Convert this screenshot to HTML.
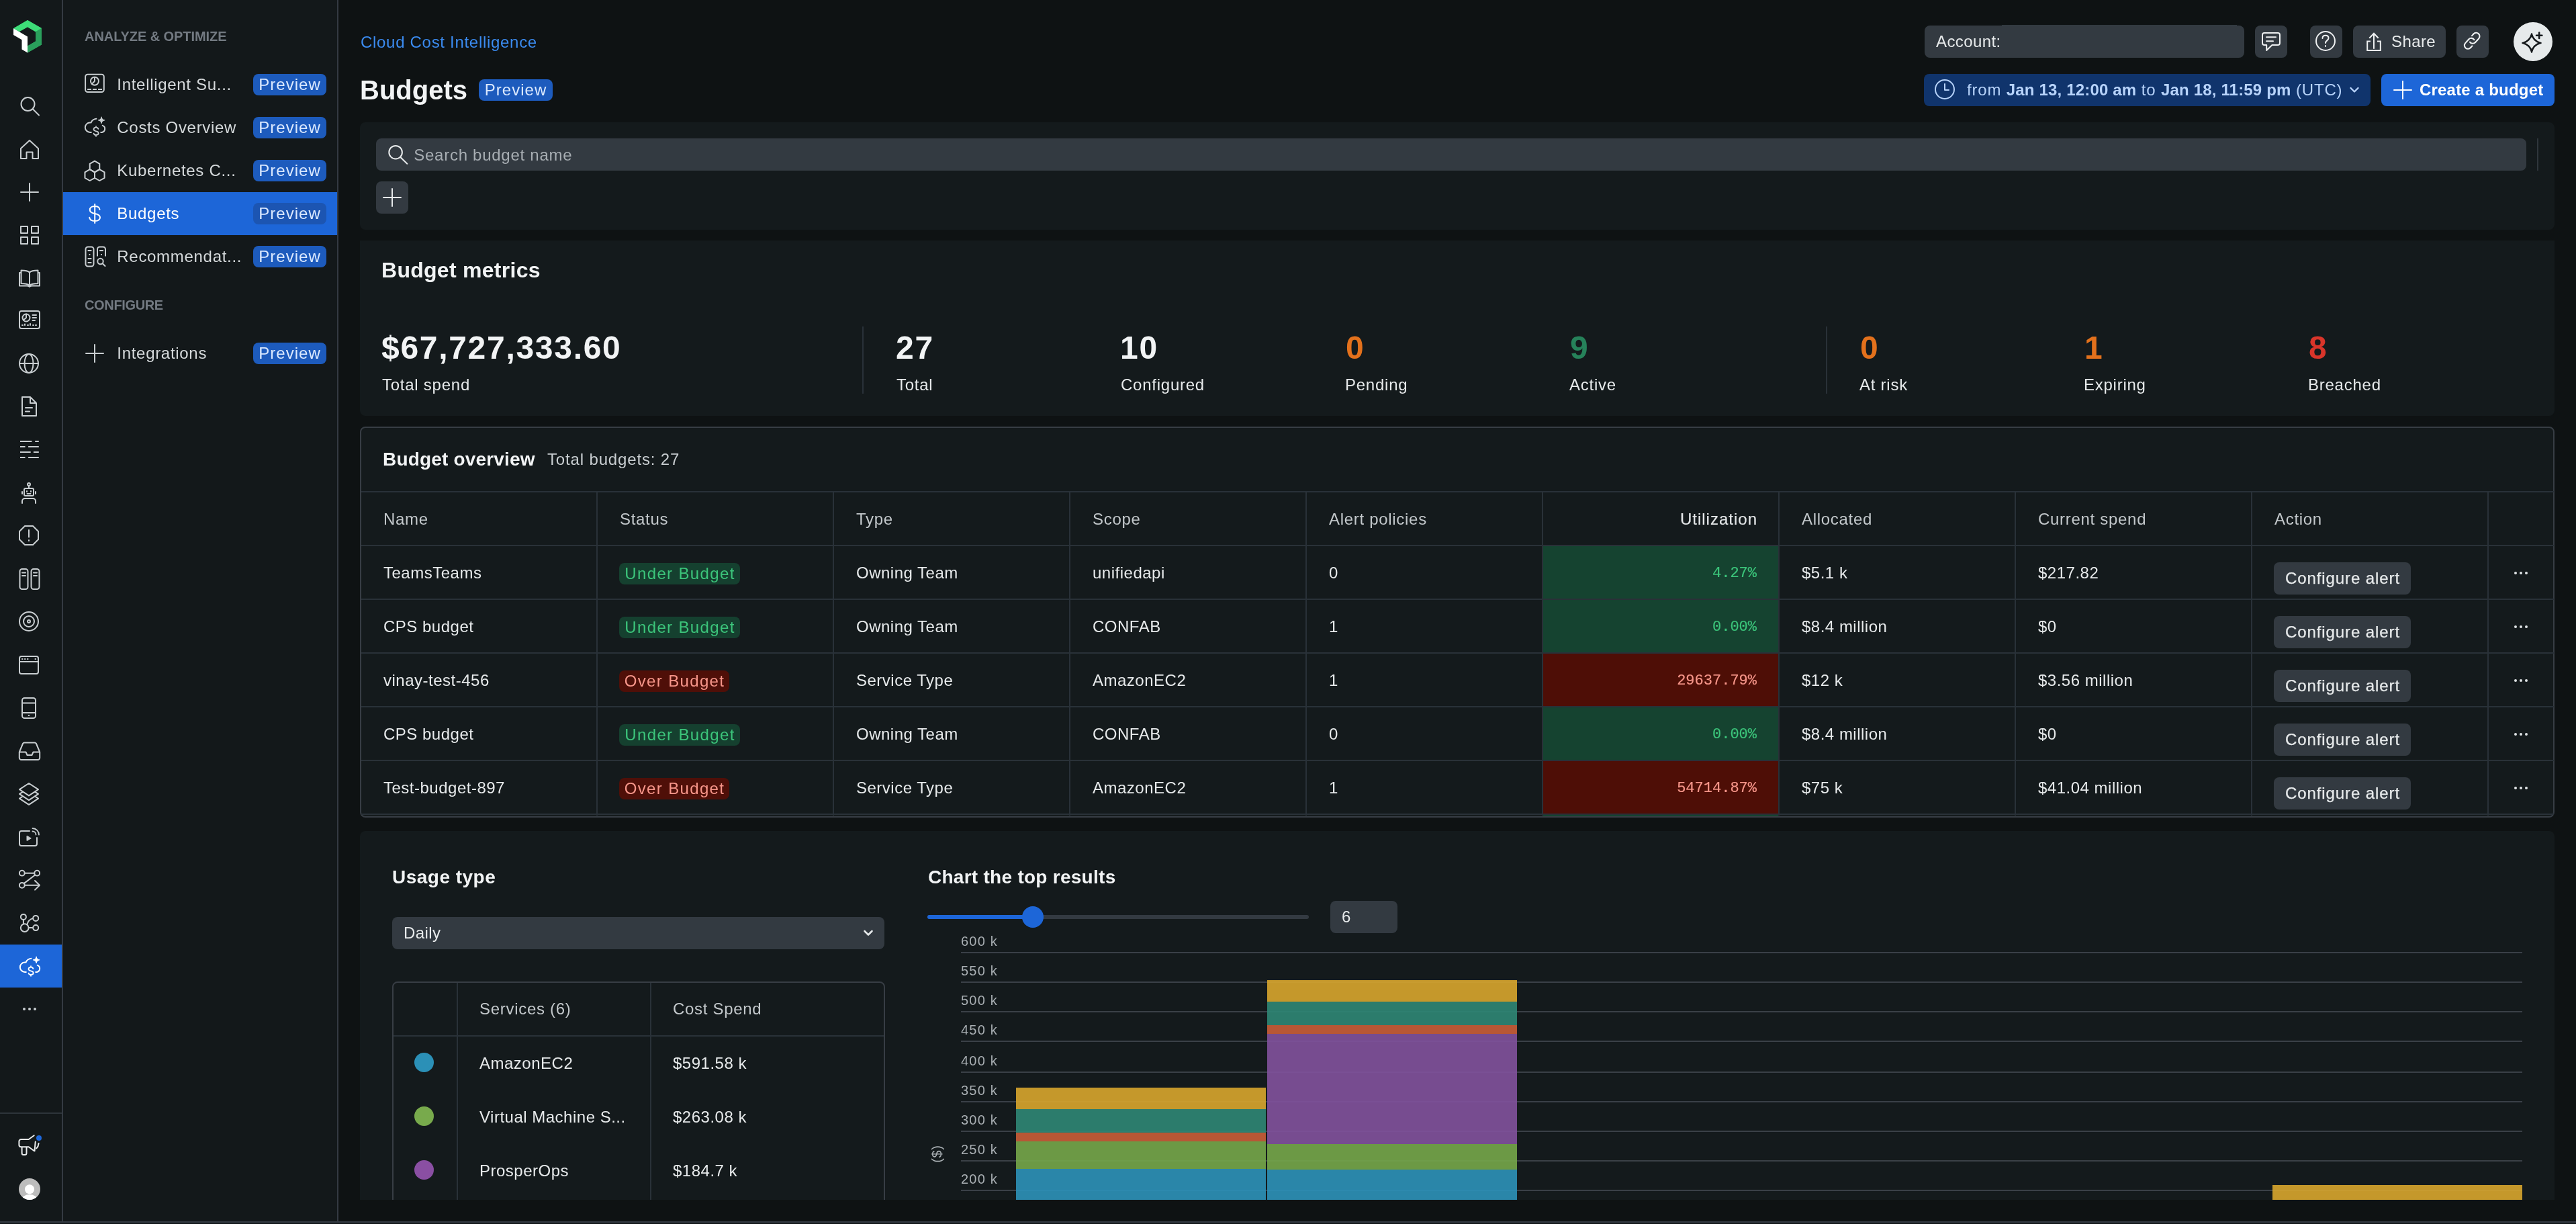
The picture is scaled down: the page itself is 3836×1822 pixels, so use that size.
<!DOCTYPE html>
<html>
<head>
<meta charset="utf-8">
<title>Budgets</title>
<style>
*{box-sizing:border-box;margin:0;padding:0}
html,body{width:3836px;height:1822px;overflow:hidden;background:#0e1213}
body{position:relative;will-change:transform;font-family:"Liberation Sans",sans-serif;color:#e7eaeb;font-size:24px}
.a{position:absolute}
.t{position:absolute;white-space:nowrap;line-height:1}
.b{font-weight:bold}
.mono{font-family:"Liberation Mono",monospace}
svg{position:absolute;overflow:visible}
.ic{fill:none;stroke:#c9ced1;stroke-width:2;stroke-linecap:round;stroke-linejoin:round}
.icw{fill:none;stroke:#fff;stroke-width:2;stroke-linecap:round;stroke-linejoin:round}
/* panels */
#rail{left:0;top:0;width:92px;height:1818px;background:#13181a}
#railb{left:92px;top:0;width:2px;height:1818px;background:#343a42}
#nav{left:94px;top:0;width:408px;height:1818px;background:#13181a}
#navb{left:502px;top:0;width:2px;height:1818px;background:#343a42}
#botline{left:0;top:1818px;width:3836px;height:2px;background:#353b43}
#botpad{left:0;top:1820px;width:3836px;height:2px;background:#13181a}
.card{position:absolute;left:536px;width:3268px;background:#141a1c;border-radius:8px}
.pv{position:absolute;width:109px;height:32px;border-radius:8px;background:#1d5bbd;color:#dbe9ff;font-size:24px;line-height:32px;text-align:center;letter-spacing:1.05px}
.nl{position:absolute;left:174.3px;white-space:nowrap;line-height:1;font-size:24px;color:#d5d9db;letter-spacing:.7px}
.sec{position:absolute;left:126px;white-space:nowrap;line-height:1;font-size:20px;font-weight:bold;color:#737a82;letter-spacing:-.06px}
.hb{position:absolute;top:38px;height:48px;border-radius:8px;background:#333a41}
.lab{color:#e7eaeb;font-size:24px;letter-spacing:.75px}
.num{font-size:48px;font-weight:bold;letter-spacing:1.7px}
/* table */
.hl{position:absolute;left:538px;width:3265px;height:2px;background:#293138}
.vl{position:absolute;top:733px;width:2px;height:481px;background:#293138}
.th{position:absolute;white-space:nowrap;line-height:1;font-size:24px;color:#c3c8cb;letter-spacing:.7px}
.td{position:absolute;white-space:nowrap;line-height:1;font-size:24px;color:#e7eaeb;letter-spacing:.5px}
.ub{position:absolute;left:922px;width:180px;height:32px;border-radius:8px;background:#15402f;color:#3cc57b;font-size:24px;line-height:32px;text-align:center;letter-spacing:1.35px;padding-left:1px}
.ob{position:absolute;left:922px;width:164px;height:32px;border-radius:8px;background:#4f0f08;color:#f7968a;font-size:24px;line-height:32px;text-align:center;letter-spacing:1.35px;padding-left:1px}
.ug{position:absolute;left:2298px;width:350px;height:78px;background:#154330}
.ur{position:absolute;left:2298px;width:350px;height:78px;background:#4e0e06}
.uv{position:absolute;right:1220px;white-space:nowrap;line-height:1;font-size:22px;font-family:"Liberation Mono",monospace;-webkit-text-stroke:.2px currentColor}
.cb{position:absolute;left:3386px;width:204px;height:48px;border-radius:8px;background:#333a41;color:#e7eaeb;font-size:24px;line-height:48px;text-align:center;letter-spacing:.9px;padding-left:1px;-webkit-text-stroke:.25px #e7eaeb}
.dots{position:absolute;left:3744px;width:20px;height:4px}
.dots i{position:absolute;top:0;width:4px;height:4px;border-radius:2px;background:#dfe3e5}
.gl{position:absolute;left:1431px;width:2325px;height:2px;background:#3a4047}
.yl{position:absolute;left:1431px;white-space:nowrap;line-height:1;font-size:20px;color:#a9afb3;letter-spacing:1.2px}
.seg{position:absolute}
</style>
</head>
<body>
<!-- PANELS -->
<div class="a" id="rail"></div>
<div class="a" id="railb"></div>
<div class="a" id="nav"></div>
<div class="a" id="navb"></div>
<div class="a" style="left:94px;top:286px;width:408px;height:64px;background:#1d66d8"></div>

<!-- RAIL ICONS -->
<!--RAIL0-->
<svg class="ic" style="left:28px;top:142px" width="32" height="32" viewBox="0 0 32 32"><circle cx="13.5" cy="13" r="10"/><path d="M21 20.5 L30 29.5"/></svg>
<svg class="ic" style="left:28px;top:206px" width="32" height="32" viewBox="0 0 32 32"><path d="M3 15 L16 3 L29 15 V30 H20.5 V20.5 H11.5 V30 H3 Z"/></svg>
<svg class="ic" style="left:28px;top:270px" width="32" height="32" viewBox="0 0 32 32"><path d="M3 16 H29 M16 3 V29"/></svg>
<svg class="ic" style="left:28px;top:334px" width="32" height="32" viewBox="0 0 32 32"><rect x="3" y="3" width="10" height="10"/><rect x="19" y="3" width="10" height="10"/><rect x="3" y="19" width="10" height="10"/><rect x="19" y="19" width="10" height="10"/></svg>
<svg class="ic" style="left:28px;top:398px" width="32" height="32" viewBox="0 0 32 32"><path d="M16 7.500 C13.500 5 9 4.500 3.500 4.500 V24 C9 24 13.500 24.500 16 27 C18.500 24.500 23 24 28.500 24 V4.500 C23 4.500 18.500 5 16 7.500 Z M16 7.500 V27 M3.500 8 H1 V27.500 H12 C14 27.500 15.200 28 16 29 C16.800 28 18 27.500 20 27.500 H31 V8 H28.500"/></svg>
<svg class="ic" style="left:28px;top:460px" width="32" height="32" viewBox="0 0 32 32"><rect x="1" y="3" width="30" height="26" rx="3"/><circle cx="11" cy="13" r="5.5"/><path d="M11 13 V7.5 M11 13 L6.8 16.5 M20.5 9 H26 M20.5 13 H26 M20.5 17 H24" /><path d="M5 24 h1 M9 24 v-1.5 M13 24 h1 M17 24 v-2 M21 24 h1 M25 24 h1" /></svg>
<svg class="ic" style="left:27px;top:525px" width="32" height="32" viewBox="0 0 32 32"><circle cx="16" cy="16" r="14"/><ellipse cx="16" cy="16" rx="6.5" ry="14"/><path d="M2 16 H30"/></svg>
<svg class="ic" style="left:27px;top:589px" width="32" height="32" viewBox="0 0 32 32"><path d="M6 2 H18 L27 11 V30 H6 Z M18 2 V11 H27 M11 18 H21 M11 23.5 H17"/></svg>
<svg class="ic" style="left:28px;top:654px" width="32" height="32" viewBox="0 0 32 32"><path stroke-linecap="butt" d="M2 3 H19.400 M24.200 3 H29.800 M2 11 H9.500 M14.100 11 H29.800 M2 19 H17.700 M21.900 19 H29.800 M2 27 H9.500 M14.100 27 H29.800"/></svg>
<svg class="ic" style="left:27px;top:718px" width="32" height="32" viewBox="0 0 32 32"><circle cx="16" cy="3" r="2"/><path d="M16 5 V9"/><rect x="9" y="9" width="14" height="11" rx="2"/><path d="M13 13 v1 M19 13 v1 M13.5 17 H18.5 M6 14 v3 M26 14 v3"/><path d="M6 31 V28 a4 4 0 0 1 4 -4 H22 a4 4 0 0 1 4 4 V31"/></svg>
<svg class="ic" style="left:27px;top:781px" width="32" height="32" viewBox="0 0 32 32"><path d="M10 2 H22 L30 10 V22 L22 30 H10 L2 22 V10 Z"/><path d="M16 8 V18.5 M16 23 V24"/></svg>
<svg class="ic" style="left:28px;top:846px" width="32" height="32" viewBox="0 0 32 32"><rect x="1.5" y="1" width="12" height="30" rx="3.5"/><rect x="18.5" y="1" width="12" height="30" rx="3.5"/><path d="M5 6.5 H10 M5 11 H10 M22 6.5 H27 M22 11 H27"/></svg>
<svg class="ic" style="left:27px;top:909px" width="32" height="32" viewBox="0 0 32 32"><circle cx="16" cy="16" r="14"/><circle cx="16" cy="16" r="8"/><circle cx="16" cy="16" r="2"/></svg>
<svg class="ic" style="left:27px;top:974px" width="32" height="32" viewBox="0 0 32 32"><rect x="2" y="3" width="28" height="26" rx="3"/><path d="M2 11 H30 M6 7 h.5 M10 7 h.5 M14 7 h.5 M25.500 7 h.5"/></svg>
<svg class="ic" style="left:27px;top:1038px" width="32" height="32" viewBox="0 0 32 32"><rect x="6" y="1" width="20" height="30" rx="3.5"/><path d="M6 8.500 H26 M6 23 H26 M15.7 27 h.6"/></svg>
<svg class="ic" style="left:28px;top:1103px" width="32" height="32" viewBox="0 0 32 32"><path d="M0.800 16.500 L6 4 C6.500 2.800 7.300 2.500 8.500 2.500 H23.500 C24.700 2.500 25.500 2.800 26 4 L31.200 16.500 V25 a3 3 0 0 1 -3 3 H3.800 a3 3 0 0 1 -3 -3 Z M0.800 16.500 H10.500 L12.500 21 H19.500 L21.500 16.500 H31.200"/></svg>
<svg class="ic" style="left:27px;top:1165px" width="32" height="32" viewBox="0 0 32 32"><path d="M16 1 L30 10.200 L16 19.400 L2 10.200 Z M7.100 13.550 L2 16.900 L16 26.100 L30 16.900 L24.900 13.550 M7.100 20.250 L2 23.600 L16 32.800 L30 23.600 L24.900 20.250"/></svg>
<svg class="ic" style="left:27px;top:1230px" width="32" height="32" viewBox="0 0 32 32"><path d="M17 7 H5 a3 3 0 0 0 -3 3 V26 a3 3 0 0 0 3 3 H25 a3 3 0 0 0 3 -3 V17"/><path d="M13 14.5 V21.5 L19 18 Z" fill="#c9ced1" stroke-width="1"/><path d="M21.500 7.500 a5 5 0 0 1 5 5 M21.500 3 a9.500 9.500 0 0 1 9.500 9.500" stroke-width="1.8"/></svg>
<svg class="ic" style="left:27px;top:1293px" width="32" height="32" viewBox="0 0 32 32"><circle cx="5.8" cy="6.7" r="3.9"/><circle cx="28.2" cy="6.7" r="3.9"/><circle cx="5.8" cy="24.8" r="3.9"/><path d="M9.8 6.7 H24.2 M25.2 9.500 L8.9 21.9 M9.8 24.8 H32 M25 18 L32 24.8 L25 31.6"/></svg>
<svg class="ic" style="left:27px;top:1357px" width="32" height="32" viewBox="0 0 32 32"><circle cx="7.9" cy="7.9" r="4"/><circle cx="26.2" cy="9.9" r="4"/><circle cx="9.7" cy="24.1" r="5.9"/><circle cx="26.2" cy="24.1" r="4"/><path d="M7.9 12 V18.400 M15.7 24.1 H22.100 M13.300 19.300 C14.500 14.500 17.500 11.200 22.200 9.900"/></svg>
<div class="a" style="left:0;top:1406px;width:92px;height:64px;background:#1d66d8"></div>
<svg class="icw" style="left:28px;top:1424px" width="32" height="32" viewBox="0 0 32 32"><path d="M10.8 22.9 H9 A7.2 7.2 0 0 1 9 8.5 L10.5 8.6 A9.6 9.6 0 0 1 18.4 2.800 M27.7 12.9 A5.2 5.2 0 0 1 27 22.9 H25.2"/><path d="M26.1 0.2 Q26.500 4.4 30.7 4.8 Q26.500 5.2 26.1 9.4 Q25.7 5.2 21.500 4.8 Q25.7 4.4 26.1 0.2 Z" fill="#fff" stroke-width="1.3"/><path d="M21.4 17.9 C20.8 16.3 19.500 15.6 18 15.6 C16 15.6 14.500 16.8 14.500 18.6 C14.500 20.4 16 21 18 21.4 C20 21.8 21.7 22.4 21.7 24.2 C21.7 26 20 26.9 18 26.9 C16.3 26.9 15 26.1 14.6 24.7 M18 14.2 V15.6 M18 26.9 V28.8" stroke-width="1.75"/></svg>
<div class="a" style="left:34px;top:1500px;width:4px;height:4px;border-radius:2px;background:#c9ced1"></div><div class="a" style="left:42px;top:1500px;width:4px;height:4px;border-radius:2px;background:#c9ced1"></div><div class="a" style="left:50px;top:1500px;width:4px;height:4px;border-radius:2px;background:#c9ced1"></div>
<div class="a" style="left:0;top:1656px;width:92px;height:2px;background:#2d343a"></div>
<svg class="icw" style="left:27px;top:1688px;stroke:#e9eced" width="32" height="32" viewBox="0 0 32 32"><path d="M15.7 8 H4.4 A3 3 0 0 0 1.4 11 V16.2 A3 3 0 0 0 4.4 19.2 H15.7 M15.7 8 L23.7 2.2 M15.7 19.2 L24 25.3 M25.8 11.500 C25.2 16 25 21 24.500 25.3 M30.6 13.9 C30.3 17 29.3 19.500 27.4 21.3 M5.6 19.2 V28.4 A2.500 2.500 0 0 0 8.1 30.9 H10 A2.500 2.500 0 0 0 12.500 28.4 V19.2"/></svg>
<div class="a" style="left:54px;top:1690px;width:8px;height:8px;border-radius:4px;background:#1d66d8"></div>
<svg style="left:28px;top:1754px" width="32" height="32" viewBox="0 0 32 32"><defs><clipPath id="avc"><circle cx="16" cy="16" r="16"/></clipPath></defs><circle cx="16" cy="16" r="16" fill="#bcbcbc"/><g clip-path="url(#avc)"><circle cx="16" cy="16.2" r="7" fill="#fff"/><ellipse cx="16" cy="33" rx="12.500" ry="9" fill="#fff"/></g></svg>
<svg style="left:20px;top:30px" width="42" height="49" viewBox="0 0 42 49"><path d="M21 0 L42 12 V36.500 L21 48.500 V38.500 L33 31.500 V17.200 L21 10.200 L8.500 17.300 L0 12.200 Z" fill="#2fa862"/><path d="M21 0 L42 12 L33 17.200 L21 10.200 L8.500 17.300 L0 12.200 Z" fill="#3ddc78"/><path d="M21 38.500 L33 31.500 V17.200 L42 12 V36.500 L21 48.500 Z" fill="#2a9f5c"/><path d="M0 12.200 L21 24.400 V48.500 L12.500 43.600 V29.200 L0 22 Z" fill="#fff"/></svg>
<!--RAIL1-->

<!-- SECONDARY NAV -->
<svg class="ic" style="left:125px;top:110px" width="32" height="32" viewBox="0 0 32 32"><rect x="2.1" y="0.8" width="27.7" height="26.2" rx="3.5"/><circle cx="15.950" cy="10.800" r="6"/><path d="M15.950 10.800 V5 M15.950 10.800 L11.800 15"/><path stroke-linecap="butt" d="M5.100 22.900 H11 M13 22.900 H18.900 M21 22.900 H27"/></svg>
<svg class="ic" style="left:125px;top:174px" width="32" height="32" viewBox="0 0 32 32"><path d="M10.8 22.9 H9 A7.2 7.2 0 0 1 9 8.5 L10.5 8.6 A9.6 9.6 0 0 1 18.4 2.800 M27.7 12.9 A5.2 5.2 0 0 1 27 22.9 H25.2"/><path d="M26.1 0.2 Q26.500 4.4 30.7 4.8 Q26.500 5.2 26.1 9.4 Q25.7 5.2 21.500 4.8 Q25.7 4.4 26.1 0.2 Z" fill="#c9ced1" stroke-width="1.3"/><path d="M21.4 17.9 C20.8 16.3 19.500 15.6 18 15.6 C16 15.6 14.500 16.8 14.500 18.6 C14.500 20.4 16 21 18 21.4 C20 21.8 21.7 22.4 21.7 24.2 C21.7 26 20 26.9 18 26.9 C16.3 26.9 15 26.1 14.6 24.7 M18 14.2 V15.6 M18 26.9 V28.8" stroke-width="1.75"/></svg>
<svg class="ic" style="left:125px;top:239px" width="32" height="32" viewBox="0 0 32 32"><polygon points="16.00,0.60 23.27,4.80 23.27,13.20 16.00,17.40 8.73,13.20 8.73,4.80"/><polygon points="8.73,13.20 16.00,17.40 16.00,25.80 8.73,30.00 1.46,25.80 1.46,17.40"/><polygon points="23.27,13.20 30.54,17.40 30.54,25.80 23.27,30.00 16.00,25.80 16.00,17.40"/></svg>
<svg class="icw" style="left:125px;top:302px" width="32" height="32" viewBox="0 0 32 32"><path d="M23.500 10 C23 6.500 20.200 5 16.200 5 C12 5 8.800 7 8.800 10.400 C8.800 14 12 15 16.200 15.900 C20.400 16.800 24 17.800 24 21.600 C24 25 20.800 27 16.200 27 C11.600 27 8.600 25.200 8.200 21.700 M16.200 2 V30" stroke-width="2"/></svg>
<svg class="ic" style="left:126px;top:366px" width="32" height="32" viewBox="0 0 32 32"><rect x="1.5" y="1.5" width="12" height="29" rx="3.500"/><path stroke-linecap="butt" d="M4.600 7 H10.400 M6.600 13 H8.400 M4.600 19 H10.400 M4.600 25 H10.400 M22.100 7 H27.900 M24.100 13 H25.900"/><path stroke-linecap="butt" d="M19 15.500 V5 A3.500 3.500 0 0 1 22.500 1.500 H27.500 A3.500 3.500 0 0 1 31 5 V15.500"/><circle cx="23.500" cy="23" r="4.200"/><path d="M26.700 26.200 L30.500 30"/></svg>
<svg class="ic" style="left:125px;top:510px" width="32" height="32" viewBox="0 0 32 32"><path d="M3 16 H29 M16 3 V29"/></svg>
<div class="sec" style="top:44px">ANALYZE &amp; OPTIMIZE</div>
<div class="nl" style="top:114px">Intelligent Su...</div><div class="pv" style="left:377px;top:110px">Preview</div>
<div class="nl" style="top:178px">Costs Overview</div><div class="pv" style="left:377px;top:174px">Preview</div>
<div class="nl" style="top:242px">Kubernetes C...</div><div class="pv" style="left:377px;top:238px">Preview</div>
<div class="nl" style="top:306px;color:#fff">Budgets</div><div class="pv" style="left:377px;top:302px;background:#1c55b2">Preview</div>
<div class="nl" style="top:370px">Recommendat...</div><div class="pv" style="left:377px;top:366px">Preview</div>
<div class="sec" style="top:444px;letter-spacing:-.35px">CONFIGURE</div>
<div class="nl" style="top:514px">Integrations</div><div class="pv" style="left:377px;top:510px">Preview</div>


<!-- HEADER -->
<div class="t" style="left:537px;top:51px;font-size:24px;color:#3b8bf0;letter-spacing:.7px">Cloud Cost Intelligence</div>
<div class="t b" style="left:536px;top:114px;font-size:40px;color:#f2f4f5">Budgets</div>
<div class="pv" style="left:713px;top:118px;width:110px">Preview</div>
<div class="hb" style="left:2866px;width:476px"></div>
<div class="a" style="left:2981px;top:37px;width:350px;height:4px;background:#333a41"></div>
<div class="t" style="left:2883px;top:50px;font-size:24px;color:#e7eaeb;letter-spacing:.4px">Account:</div>
<div class="hb" style="left:3358px;width:48px"></div>
<div class="hb" style="left:3440px;width:48px"></div>
<div class="hb" style="left:3504px;width:138px"></div>
<div class="t" style="left:3561px;top:50px;font-size:24px;color:#e7eaeb;letter-spacing:.4px">Share</div>
<div class="hb" style="left:3658px;width:48px"></div>
<div class="a" style="left:3743px;top:33px;width:58px;height:58px;border-radius:29px;background:#e6eaeb"></div>
<div class="a" style="left:2865px;top:110px;width:665px;height:48px;border-radius:8px;background:#10346c"></div>
<div class="t" style="left:2929px;top:122px;font-size:24px;color:#b7d3fa;letter-spacing:.8px">from <b style="letter-spacing:.18px">Jan 13, 12:00 am</b> to <b style="letter-spacing:.18px">Jan 18, 11:59 pm</b> (UTC)</div>
<div class="a" style="left:3546px;top:110px;width:258px;height:48px;border-radius:8px;background:#1d66d8"></div>
<svg class="ic" style="left:3366px;top:46px;stroke:#eef0f1" width="32" height="32" viewBox="0 0 32 32"><path d="M6 3 H26 a3 3 0 0 1 3 3 V18 a3 3 0 0 1 -3 3 H17.500 L9.200 29 V21 H6 a3 3 0 0 1 -3 -3 V6 a3 3 0 0 1 3 -3 Z M9 9.200 H23 M9 15.200 H19"/></svg>
<svg class="ic" style="left:3447px;top:45px;stroke:#eef0f1" width="32" height="32" viewBox="0 0 32 32"><circle cx="16" cy="16" r="14"/><path d="M11.500 12 C11.500 9.300 13.500 7.800 16 7.800 C18.500 7.800 20.500 9.300 20.500 11.800 C20.500 15 16 15.300 16 19 M16 23 V24"/></svg>
<svg class="ic" style="left:3519px;top:46px;stroke:#eef0f1;stroke-linecap:butt;stroke-linejoin:miter" width="32" height="32" viewBox="0 0 32 32"><path d="M11 15.6 H6.2 V28.9 H25.8 V15.6 H21 M16 26.8 V4 M9.300 10.700 L16 3.700 L22.700 10.700"/></svg>
<svg class="ic" style="left:3665px;top:46px;stroke:#eef0f1;stroke-width:2.1" width="32" height="32" viewBox="0 0 32 32"><g transform="translate(19.8 10.8) rotate(-48)"><path d="M0.2 -5.2 H3.75 A5.2 5.2 0 0 1 3.75 5.2 H-3.75 A5.2 5.2 0 0 1 -8.8 -1.2"/></g><g transform="translate(12.6 18.8) rotate(132)"><path d="M0.2 -5.2 H3.75 A5.2 5.2 0 0 1 3.75 5.2 H-3.75 A5.2 5.2 0 0 1 -8.8 -1.2"/></g></svg>
<svg style="left:3754px;top:48px" width="32" height="32" viewBox="-16 -16 32 32" fill="none" stroke="#15191c" stroke-width="2.500" stroke-linecap="round" stroke-linejoin="round"><path d="M0 -12.800 Q2.800 -2.800 12.800 0 Q2.800 2.800 0 12.800 Q-2.800 2.800 -12.800 0 Q-2.800 -2.800 0 -12.800 Z M0 -13.500 V-10 M0 13.500 V10 M-13.500 0 H-10 M13.500 0 H10"/><path d="M11.200 -15.400 V-7 M7 -11.200 H15.400"/></svg>
<svg style="left:2880px;top:117px" width="32" height="32" viewBox="0 0 32 32" fill="none" stroke="#b7d3fa" stroke-width="2" stroke-linecap="round" stroke-linejoin="round"><circle cx="16" cy="16" r="14"/><path d="M16 8 V17 H22"/></svg>
<svg style="left:3498px;top:128px" width="16" height="12" viewBox="0 0 16 12"><path d="M2.500 3 L8 8.500 L13.500 3" fill="none" stroke="#b7d3fa" stroke-width="2.400" stroke-linecap="round" stroke-linejoin="round"/></svg>
<svg class="icw" style="left:3562px;top:118px" width="32" height="32" viewBox="0 0 32 32"><path d="M3 16 H29 M16 3 V29"/></svg>
<div class="t b" style="left:3603px;top:122px;font-size:24px;color:#fff;letter-spacing:.2px">Create a budget</div>


<!-- FILTER CARD -->
<div class="card" style="top:182px;height:160px"></div>
<div class="a" style="left:560px;top:206px;width:3202px;height:48px;border-radius:8px;background:#333a41"></div>
<svg class="icw" style="left:577px;top:214px;stroke:#e7eaeb" width="32" height="32" viewBox="0 0 32 32"><circle cx="12.100" cy="12.700" r="9.800"/><path d="M19.300 20 L29.300 29.800"/></svg>
<div class="t" style="left:616.3px;top:218.8px;font-size:24px;color:#a8aeb3;letter-spacing:.73px">Search budget name</div>
<div class="a" style="left:3778px;top:206px;width:2px;height:48px;background:#2f363c"></div>
<div class="a" style="left:560px;top:270px;width:48px;height:48px;border-radius:8px;background:#333a41"></div>
<svg class="icw" style="left:568px;top:278px;stroke:#e7eaeb" width="32" height="32" viewBox="0 0 32 32"><path d="M3 16 H29 M16 3 V29"/></svg>


<!-- METRICS CARD -->
<div class="card" style="top:358px;height:261px;border-radius:0 0 8px 8px"></div>
<div class="t b" style="left:568px;top:386px;font-size:32px;color:#f2f4f5;letter-spacing:.28px">Budget metrics</div>
<div class="t num" style="left:568px;top:494px;color:#f2f4f5">$67,727,333.60</div>
<div class="t lab" style="left:569px;top:561px">Total spend</div>
<div class="a" style="left:1284px;top:486px;width:2px;height:100px;background:#293138"></div>
<div class="t num" style="left:1334px;top:494px;color:#f2f4f5">27</div>
<div class="t lab" style="left:1335px;top:561px">Total</div>
<div class="t num" style="left:1668px;top:494px;color:#f2f4f5">10</div>
<div class="t lab" style="left:1669px;top:561px">Configured</div>
<div class="t num" style="left:2004px;top:494px;color:#e3711c">0</div>
<div class="t lab" style="left:2003px;top:561px">Pending</div>
<div class="t num" style="left:2338px;top:494px;color:#26825a">9</div>
<div class="t lab" style="left:2337px;top:561px">Active</div>
<div class="a" style="left:2719px;top:486px;width:2px;height:100px;background:#293138"></div>
<div class="t num" style="left:2770px;top:494px;color:#e3711c">0</div>
<div class="t lab" style="left:2769px;top:561px">At risk</div>
<div class="t num" style="left:3104px;top:494px;color:#e3711c">1</div>
<div class="t lab" style="left:3103px;top:561px">Expiring</div>
<div class="t num" style="left:3438px;top:494px;color:#d9352a">8</div>
<div class="t lab" style="left:3437px;top:561px">Breached</div>


<!-- TABLE CARD -->
<div class="a" style="left:536px;top:635px;width:3268px;height:582px;border:2px solid #373d44;border-radius:8px;background:#141a1c"></div>
<div class="t b" style="left:570px;top:670px;font-size:28px;color:#f2f4f5;letter-spacing:.18px">Budget overview</div>
<div class="t" style="left:815px;top:672px;font-size:24px;color:#c9ced1;letter-spacing:.85px">Total budgets: 27</div>
<div class="hl" style="top:731px"></div>
<div class="hl" style="top:811px"></div>
<div class="hl" style="top:891px"></div>
<div class="hl" style="top:971px"></div>
<div class="hl" style="top:1051px"></div>
<div class="hl" style="top:1131px"></div>
<div class="hl" style="top:1211px"></div>
<div class="vl" style="left:888px"></div>
<div class="vl" style="left:1240px"></div>
<div class="vl" style="left:1592px"></div>
<div class="vl" style="left:1944px"></div>
<div class="vl" style="left:2296px"></div>
<div class="vl" style="left:2648px"></div>
<div class="vl" style="left:3000px"></div>
<div class="vl" style="left:3352px"></div>
<div class="vl" style="left:3704px"></div>
<div class="th" style="left:571px;top:761px">Name</div>
<div class="th" style="left:923px;top:761px">Status</div>
<div class="th" style="left:1275px;top:761px">Type</div>
<div class="th" style="left:1627px;top:761px">Scope</div>
<div class="th" style="left:1979px;top:761px">Alert policies</div>
<div class="th" style="left:2683px;top:761px">Allocated</div>
<div class="th" style="left:3035px;top:761px">Current spend</div>
<div class="th" style="left:3387px;top:761px">Action</div>
<div class="th" style="right:1220px;top:761px;color:#e4e7e8;letter-spacing:1px;margin-right:-1px;-webkit-text-stroke:.15px #e4e7e8">Utilization</div>
<div class="ug" style="top:813px"></div>
<div class="td" style="left:571px;top:841px">TeamsTeams</div>
<div class="ub" style="top:838px">Under Budget</div>
<div class="td" style="left:1275px;top:841px">Owning Team</div>
<div class="td" style="left:1627px;top:841px">unifiedapi</div>
<div class="td" style="left:1979px;top:841px">0</div>
<div class="uv" style="top:843px;color:#3cc57b">4.27%</div>
<div class="td" style="left:2683px;top:841px">$5.1 k</div>
<div class="td" style="left:3035px;top:841px">$217.82</div>
<div class="cb" style="top:837px">Configure alert</div>
<div class="dots" style="top:851px"><i style="left:0"></i><i style="left:8px"></i><i style="left:16px"></i></div>
<div class="ug" style="top:893px"></div>
<div class="td" style="left:571px;top:921px">CPS budget</div>
<div class="ub" style="top:918px">Under Budget</div>
<div class="td" style="left:1275px;top:921px">Owning Team</div>
<div class="td" style="left:1627px;top:921px">CONFAB</div>
<div class="td" style="left:1979px;top:921px">1</div>
<div class="uv" style="top:923px;color:#3cc57b">0.00%</div>
<div class="td" style="left:2683px;top:921px">$8.4 million</div>
<div class="td" style="left:3035px;top:921px">$0</div>
<div class="cb" style="top:917px">Configure alert</div>
<div class="dots" style="top:931px"><i style="left:0"></i><i style="left:8px"></i><i style="left:16px"></i></div>
<div class="ur" style="top:973px"></div>
<div class="td" style="left:571px;top:1001px">vinay-test-456</div>
<div class="ob" style="top:998px">Over Budget</div>
<div class="td" style="left:1275px;top:1001px">Service Type</div>
<div class="td" style="left:1627px;top:1001px">AmazonEC2</div>
<div class="td" style="left:1979px;top:1001px">1</div>
<div class="uv" style="top:1003px;color:#f7968a">29637.79%</div>
<div class="td" style="left:2683px;top:1001px">$12 k</div>
<div class="td" style="left:3035px;top:1001px">$3.56 million</div>
<div class="cb" style="top:997px">Configure alert</div>
<div class="dots" style="top:1011px"><i style="left:0"></i><i style="left:8px"></i><i style="left:16px"></i></div>
<div class="ug" style="top:1053px"></div>
<div class="td" style="left:571px;top:1081px">CPS budget</div>
<div class="ub" style="top:1078px">Under Budget</div>
<div class="td" style="left:1275px;top:1081px">Owning Team</div>
<div class="td" style="left:1627px;top:1081px">CONFAB</div>
<div class="td" style="left:1979px;top:1081px">0</div>
<div class="uv" style="top:1083px;color:#3cc57b">0.00%</div>
<div class="td" style="left:2683px;top:1081px">$8.4 million</div>
<div class="td" style="left:3035px;top:1081px">$0</div>
<div class="cb" style="top:1077px">Configure alert</div>
<div class="dots" style="top:1091px"><i style="left:0"></i><i style="left:8px"></i><i style="left:16px"></i></div>
<div class="ur" style="top:1133px"></div>
<div class="td" style="left:571px;top:1161px">Test-budget-897</div>
<div class="ob" style="top:1158px">Over Budget</div>
<div class="td" style="left:1275px;top:1161px">Service Type</div>
<div class="td" style="left:1627px;top:1161px">AmazonEC2</div>
<div class="td" style="left:1979px;top:1161px">1</div>
<div class="uv" style="top:1163px;color:#f7968a">54714.87%</div>
<div class="td" style="left:2683px;top:1161px">$75 k</div>
<div class="td" style="left:3035px;top:1161px">$41.04 million</div>
<div class="cb" style="top:1157px">Configure alert</div>
<div class="dots" style="top:1171px"><i style="left:0"></i><i style="left:8px"></i><i style="left:16px"></i></div>


<div class="a" style="left:2298px;top:1213px;width:350px;height:2px;background:#154330"></div>
<!-- CHART CARD -->
<div class="card" style="top:1237px;height:549px;border-bottom-left-radius:0;border-bottom-right-radius:0"></div>
<div class="t b" style="left:584px;top:1292px;font-size:28px;color:#f2f4f5;letter-spacing:.48px">Usage type</div>
<div class="a" style="left:584px;top:1365px;width:733px;height:48px;border-radius:8px;background:#333a41"></div>
<div class="t" style="left:601px;top:1377px;font-size:24px;color:#e7eaeb;letter-spacing:.4px">Daily</div>
<svg style="left:1285px;top:1383px" width="16" height="12" viewBox="0 0 16 12"><path d="M2.5 3 L8 8.5 L13.5 3" fill="none" stroke="#e7eaeb" stroke-width="2.6" stroke-linecap="round" stroke-linejoin="round"/></svg>
<div class="a" style="left:584px;top:1461px;width:734px;height:340px;border:2px solid #373d44;border-radius:8px;background:#141a1c"></div>
<div class="a" style="left:586px;top:1541px;width:730px;height:2px;background:#293138"></div>
<div class="a" style="left:680px;top:1463px;width:2px;height:330px;background:#293138"></div>
<div class="a" style="left:968px;top:1463px;width:2px;height:330px;background:#293138"></div>
<div class="th" style="left:714px;top:1490px">Services (6)</div>
<div class="th" style="left:1002px;top:1490px">Cost Spend</div>
<div class="a" style="left:617px;top:1567px;width:29px;height:29px;border-radius:15px;background:#2b90b7"></div>
<div class="td" style="left:714px;top:1571px">AmazonEC2</div>
<div class="td" style="left:1002px;top:1571px">$591.58 k</div>
<div class="a" style="left:617px;top:1647px;width:29px;height:29px;border-radius:15px;background:#78aa4c"></div>
<div class="td" style="left:714px;top:1651px">Virtual Machine S...</div>
<div class="td" style="left:1002px;top:1651px">$263.08 k</div>
<div class="a" style="left:617px;top:1727px;width:29px;height:29px;border-radius:15px;background:#8a4fa3"></div>
<div class="td" style="left:714px;top:1731px">ProsperOps</div>
<div class="td" style="left:1002px;top:1731px">$184.7 k</div>
<div class="t b" style="left:1382px;top:1292px;font-size:28px;color:#f2f4f5;letter-spacing:.27px">Chart the top results</div>
<div class="a" style="left:1381px;top:1362px;width:568px;height:6px;border-radius:3px;background:#333a41"></div>
<div class="a" style="left:1381px;top:1362px;width:160px;height:6px;border-radius:3px;background:#1d66d8"></div>
<div class="a" style="left:1522px;top:1349px;width:32px;height:32px;border-radius:16px;background:#1d66d8"></div>
<div class="a" style="left:1981px;top:1341px;width:100px;height:48px;border-radius:8px;background:#333a41"></div>
<div class="t" style="left:1998px;top:1353px;font-size:24px;color:#e7eaeb">6</div>
<div class="gl" style="top:1417px"></div>
<div class="yl" style="top:1390.5px">600 k</div>
<div class="gl" style="top:1461px"></div>
<div class="yl" style="top:1434.5px">550 k</div>
<div class="gl" style="top:1505px"></div>
<div class="yl" style="top:1478.5px">500 k</div>
<div class="gl" style="top:1549px"></div>
<div class="yl" style="top:1522.5px">450 k</div>
<div class="gl" style="top:1595px"></div>
<div class="yl" style="top:1568.5px">400 k</div>
<div class="gl" style="top:1639px"></div>
<div class="yl" style="top:1612.5px">350 k</div>
<div class="gl" style="top:1683px"></div>
<div class="yl" style="top:1656.5px">300 k</div>
<div class="gl" style="top:1727px"></div>
<div class="yl" style="top:1700.5px">250 k</div>
<div class="gl" style="top:1771px"></div>
<div class="yl" style="top:1744.5px">200 k</div>
<div class="t" style="left:1378px;top:1707.5px;font-size:20px;color:#a9afb3;transform:rotate(-90deg);transform-origin:center;width:34px;text-align:center;letter-spacing:.6px;padding-left:.6px">($)</div>
<div class="seg" style="left:1513px;top:1619px;width:372px;height:32px;background:rgba(216,166,45,0.9)"></div>
<div class="seg" style="left:1513px;top:1651px;width:372px;height:35px;background:rgba(47,135,117,0.9)"></div>
<div class="seg" style="left:1513px;top:1686px;width:372px;height:13px;background:rgba(202,94,56,0.9)"></div>
<div class="seg" style="left:1513px;top:1699px;width:372px;height:41px;background:rgba(117,167,74,0.9)"></div>
<div class="seg" style="left:1513px;top:1740px;width:372px;height:46px;background:rgba(44,146,185,0.9)"></div>
<div class="seg" style="left:1887px;top:1459px;width:372px;height:32px;background:rgba(216,166,45,0.9)"></div>
<div class="seg" style="left:1887px;top:1491px;width:372px;height:35px;background:rgba(47,135,117,0.9)"></div>
<div class="seg" style="left:1887px;top:1526px;width:372px;height:13px;background:rgba(202,94,56,0.9)"></div>
<div class="seg" style="left:1887px;top:1539px;width:372px;height:164px;background:rgba(130,82,157,0.9)"></div>
<div class="seg" style="left:1887px;top:1703px;width:372px;height:38px;background:rgba(117,167,74,0.9)"></div>
<div class="seg" style="left:1887px;top:1741px;width:372px;height:45px;background:rgba(44,146,185,0.9)"></div>
<div class="seg" style="left:3384px;top:1764px;width:372px;height:22px;background:rgba(216,166,45,0.9)"></div>
<div class="a" style="left:504px;top:1786px;width:3332px;height:32px;background:#0e1213"></div>


<div class="a" id="botline"></div>
<div class="a" id="botpad"></div>
</body>
</html>
